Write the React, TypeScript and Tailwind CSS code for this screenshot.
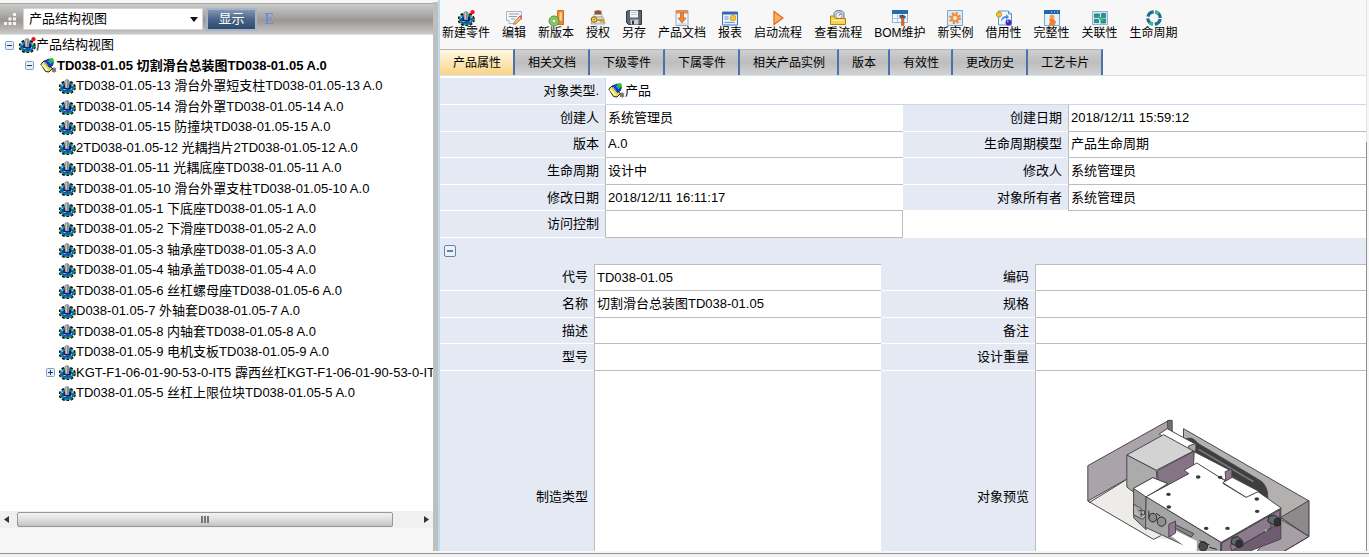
import React from 'react';
import { clsx } from 'clsx';

type IconProps = { className?: string };

function GearIcon({ dot = false, className }: IconProps & { dot?: boolean }) {
  return (
    <svg viewBox="0 0 17 16" className={clsx('shrink-0', className)} aria-hidden="true">
      <ellipse cx="8.200" cy="9.500" rx="7.800" ry="6" fill="none" stroke="#0a1a10" strokeWidth="1.800" strokeDasharray="2.800 1.600" />
      <ellipse cx="8.200" cy="9.500" rx="7" ry="5.200" fill="#1450c8" />
      <ellipse cx="8.200" cy="9.800" rx="6.400" ry="4.600" fill="none" stroke="#12a038" strokeWidth="2" strokeDasharray="2 2.400" />
      <path d="M2.500 6.500h2v1.500h-2zM11 10h2v1.500h-2zM4.500 11h2v1h-2zM12.500 6.500h1.500v1.500h-1.500z" fill="#6fd6ff" />
      <path d="M4.500 7h7.500v4H4.500z" fill="#0a1850" />
      <path d="M6 2.500q2-2 4 0V10H6z" fill="#c9c9cd" stroke="#55555c" strokeWidth=".6" />
      <path d="M8.800 2.200v7.600" stroke="#77777e" strokeWidth="1.200" />
      {dot && <circle cx="14.500" cy="2.200" r="2.100" fill="#fb0d1b" />}
    </svg>
  );
}

function AssemblyIcon({ className }: IconProps) {
  return (
    <svg viewBox="0 0 17 16" className={clsx('shrink-0', className)} aria-hidden="true">
      <path d="M.800 6L4 3l8.500 7.500L9 14 5.500 13.500z" fill="#e8dc4c" stroke="#2b2a08" strokeWidth="1" />
      <path d="M2 6.500l5.500 6" stroke="#fffbd0" strokeWidth="1.800" />
      <path d="M4 3l5-2 4.500 3-1 3.500-3 2z" fill="#1538d8" stroke="#0a1560" strokeWidth=".7" />
      <path d="M5 4l3 3.500M8 2.500l3 3.500" stroke="#52a8ff" strokeWidth="1" />
      <circle cx="11.500" cy="2.500" r="2.400" fill="#17d129" />
      <path d="M14 9.500v5M11.800 10.500l4.400 3M16.200 10.500l-4.400 3" stroke="#222" strokeWidth="1" />
      <circle cx="14" cy="12" r="1" fill="#fff" stroke="#222" strokeWidth=".6" />
    </svg>
  );
}

const toolIcons: Record<string, React.ReactNode> = {
  edit: (
    <>
      <path d="M.5 1.500h15v8H12l-2 4H3v-3H.500z" fill="#f5f8fb" stroke="#a9b6c4" />
      <path d="M3 4h10M3 6.500h8M5 9h4" stroke="#8fa0b3" />
      <path d="M7.500 14.500l1-3 6-6 2 2-6 6z" fill="#f0b672" stroke="#a8662a" strokeWidth=".7" />
      <path d="M13.500 6l2 2" stroke="#d4576a" strokeWidth="1.300" />
    </>
  ),
  version: (
    <>
      <path d="M9.500.500h6v14h-6z" fill="#f28a2c" stroke="#d46f15" />
      <path d="M11.500 2.500h2.500v8h-2.500z" fill="#fbd8a8" />
      <circle cx="6" cy="11" r="5" fill="#8cc765" stroke="#4c9a39" />
      <circle cx="6" cy="11" r="2" fill="#f4fbef" stroke="#4c9a39" strokeWidth=".7" />
    </>
  ),
  auth: (
    <>
      <path d="M4.500 1q3.500-1.500 7 0v4h-7z" fill="#90512c" />
      <path d="M4 4.500h8v2.500H4z" fill="#f8f8fa" stroke="#959aa5" strokeWidth=".7" />
      <path d="M3 7h10l2 7H1z" fill="#d9dde4" stroke="#8e94a0" strokeWidth=".7" />
      <circle cx="4" cy="9.500" r="2.700" fill="#ffe36b" stroke="#98760c" strokeWidth="1.200" />
      <path d="M6.500 10h7v3M11 10v2.500" stroke="#c9a01e" strokeWidth="1.800" fill="none" />
      <circle cx="4" cy="9.500" r=".8" fill="#715508" />
    </>
  ),
  save: (
    <>
      <path d="M.500 1.500l2-1h13v14h-13l-2-2z" fill="#5c6770" stroke="#313940" />
      <path d="M4 .500h8v7H4z" fill="#f2f4f5" />
      <path d="M5 2.500h6M5 4.500h6" stroke="#c2c8cc" />
      <path d="M4.500 9.500h8v5h-8z" fill="#c7cdd1" />
      <path d="M6 10.500h2v4H6z" fill="#2f373d" />
    </>
  ),
  document: (
    <>
      <path d="M2 .500h12v15H2z" fill="#f3f6fb" stroke="#98a9c4" />
      <path d="M2 .500h12v3H2z" fill="#e98a43" />
      <path d="M6.500 3h3v5H12l-4 5-4-5h2.500z" fill="#f08534" stroke="#cf5f12" strokeWidth=".7" />
      <path d="M4 14h8" stroke="#b5c4de" />
    </>
  ),
  report: (
    <>
      <path d="M.500 2h15v13H.500z" fill="#e5f0fd" stroke="#4776b8" />
      <path d="M.500 2h15v2.500H.500z" fill="#2f67b5" />
      <path d="M2.500 7h4M2.500 9h4M2.500 12.500h10" stroke="#6d9ad4" />
      <circle cx="11" cy="8" r="2.900" fill="#f3c433" stroke="#c98c14" strokeWidth=".6" />
    </>
  ),
  start: <path d="M4 1.500v13l9-6.500z" fill="#fbae5c" stroke="#e06a16" strokeWidth="1.200" />,
  viewflow: (
    <>
      <path d="M4 4q0-3.500 5-3.500t5 3.500v6H4z" fill="#c7d3dd" stroke="#6d7a86" />
      <circle cx="9" cy="5.500" r="3" fill="#edf5fa" stroke="#7e8c99" strokeWidth=".7" />
      <path d="M9 5.500l1.800-1.800" stroke="#34404b" />
      <path d="M.500 6H4l1.500 2.500H15.500v6H.500z" fill="#f6d154" stroke="#af8413" />
      <path d="M2 10.500h12" stroke="#fff0ab" />
    </>
  ),
  bom: (
    <>
      <path d="M.500.500h15v12H.500z" fill="#f7fbff" stroke="#8cb2d6" />
      <path d="M0 0h16v4H0z" fill="#246baf" />
      <path d="M.500 8.500h15M5.500 4v8.500M10.500 4v8.500" stroke="#a9c9e6" />
      <path d="M7 5.500q4-2 7 1l-1 1.500H8z" fill="#525b64" />
      <path d="M9.500 8h2.500v7.500H9.500z" fill="#ea6638" stroke="#b53d15" strokeWidth=".5" />
    </>
  ),
  instance: (
    <>
      <path d="M.500.500h15v15H.500z" fill="#dcebf8" stroke="#7ba9d2" />
      <circle cx="8" cy="8" r="4.300" fill="#f29143" />
      <circle cx="8" cy="8" r="5" fill="none" stroke="#ee8231" strokeWidth="2" strokeDasharray="2 1.927" />
      <circle cx="8" cy="8" r="1.900" fill="#fdf3e7" />
    </>
  ),
  borrow: (
    <>
      <path d="M2.500 1h10l3 3v11h-13z" fill="#f1f7ff" stroke="#5b91d3" />
      <path d="M12.500 1v3h3" fill="none" stroke="#5b91d3" />
      <path d="M5 12q0-6 5-6V4l3 3-3 3V8q-3 0-5 4z" fill="#4c8de4" />
      <circle cx="3" cy="4.500" r="2.700" fill="#f2c222" stroke="#ae820d" strokeWidth=".6" />
      <circle cx="12.500" cy="12.500" r="3" fill="#4226b6" />
      <circle cx="11.700" cy="11.500" r="1" fill="#a392ec" />
    </>
  ),
  integrity: (
    <>
      <path d="M.500.500h15v15H.500z" fill="#e9f3fc" stroke="#78a7d4" />
      <path d="M0 0h16v4H0z" fill="#1c67ae" />
      <path d="M7 2h1M10 2h1M13 2h1" stroke="#d7eaff" />
      <circle cx="8" cy="7" r="2.500" fill="#f5a35c" />
      <path d="M5 9h5l2 3-1.500 3.500h-6L6 12z" fill="#ef8332" />
    </>
  ),
  relation: (
    <>
      <path d="M.500 1.500h15v13H.500z" fill="#cfe3f1" stroke="#8eb5cd" />
      <path d="M2.500 4h5v3.500h-5zM9.500 3.500h4v4h-4zM2.500 9.500h4v3h-4zM9 9h4.500v4H9z" fill="#28958d" stroke="#126a70" strokeWidth=".6" />
      <path d="M6 6l5 5" stroke="#33b481" strokeWidth="1.800" />
    </>
  ),
  lifecycle: (
    <>
      <circle cx="8" cy="8" r="6.200" fill="none" stroke="#1d6f8e" strokeWidth="3.200" strokeDasharray="7.739 2" strokeDashoffset="-1" />
      <path d="M12.400 3.600A6.200 6.200 0 0 0 9 1.900M3.600 12.400A6.200 6.200 0 0 0 7 14.100" fill="none" stroke="#3bb594" strokeWidth="3.200" />
    </>
  ),
};

const tools = [
  { label: '新建零件', icon: 'gear' },
  { label: '编辑', icon: 'edit' },
  { label: '新版本', icon: 'version' },
  { label: '授权', icon: 'auth' },
  { label: '另存', icon: 'save' },
  { label: '产品文档', icon: 'document' },
  { label: '报表', icon: 'report' },
  { label: '启动流程', icon: 'start' },
  { label: '查看流程', icon: 'viewflow' },
  { label: 'BOM维护', icon: 'bom' },
  { label: '新实例', icon: 'instance' },
  { label: '借用性', icon: 'borrow' },
  { label: '完整性', icon: 'integrity' },
  { label: '关联性', icon: 'relation' },
  { label: '生命周期', icon: 'lifecycle' },
];

const tabs = ['产品属性', '相关文档', '下级零件', '下属零件', '相关产品实例', '版本', '有效性', '更改历史', '工艺卡片'];

const parts = [
  'TD038-01.05-13 滑台外罩短支柱TD038-01.05-13 A.0',
  'TD038-01.05-14 滑台外罩TD038-01.05-14 A.0',
  'TD038-01.05-15 防撞块TD038-01.05-15 A.0',
  '2TD038-01.05-12 光耦挡片2TD038-01.05-12 A.0',
  'TD038-01.05-11 光耦底座TD038-01.05-11 A.0',
  'TD038-01.05-10 滑台外罩支柱TD038-01.05-10 A.0',
  'TD038-01.05-1 下底座TD038-01.05-1 A.0',
  'TD038-01.05-2 下滑座TD038-01.05-2 A.0',
  'TD038-01.05-3 轴承座TD038-01.05-3 A.0',
  'TD038-01.05-4 轴承盖TD038-01.05-4 A.0',
  'TD038-01.05-6 丝杠螺母座TD038-01.05-6 A.0',
  'D038-01.05-7 外轴套D038-01.05-7 A.0',
  'TD038-01.05-8 内轴套TD038-01.05-8 A.0',
  'TD038-01.05-9 电机支板TD038-01.05-9 A.0',
  'KGT-F1-06-01-90-53-0-IT5 霹西丝杠KGT-F1-06-01-90-53-0-IT5',
  'TD038-01.05-5 丝杠上限位块TD038-01.05-5 A.0',
];

function Toggle({ open, label }: { open: boolean; label: string }) {
  return (
    <button type="button" aria-label={label} aria-expanded={open} className="size-[9px] shrink-0">
      <svg viewBox="0 0 9 9" className="size-[9px]">
        <rect x=".5" y=".5" width="8" height="8" rx="1" fill="#e6f0fa" stroke="#7f9fc4" />
        <path d={open ? 'M2 4.500h5' : 'M2 4.500h5M4.500 2v5'} stroke="#1f3556" />
      </svg>
    </button>
  );
}

function TreePanel() {
  return (
    <aside className="flex w-[433px] shrink-0 flex-col overflow-hidden bg-white">
      <div className="h-[3px] shrink-0 bg-[#f7f7f7]" />
      <div className="flex h-8 shrink-0 items-center border-y border-t-[#a8a8a8] border-b-[#e2e2e2] bg-linear-to-b from-[#cdcdcd] via-[#9b9793] via-55% to-[#c9c9c9] pl-1">
        <svg viewBox="0 0 12 12" className="mr-[7px] size-3" fill="#f4f4f4" aria-hidden="true">
          <path d="M0 9h3v3H0zM4.500 9h3v3h-3zM9 9h3v3H9zM4.500 4.500h3v3h-3zM9 4.500h3v3H9zM9 0h3v3H9z" />
        </svg>
        <div className="relative">
          <select aria-label="视图" className="block h-[22px] w-[180px] appearance-none border border-[#d4d4d4] bg-white pl-[5px] text-[13px] leading-5">
            <option>产品结构视图</option>
          </select>
          <svg viewBox="0 0 8 5" className="pointer-events-none absolute top-[9px] right-[5px] h-[5px] w-2" aria-hidden="true">
            <path d="M0 0h8L4 5z" fill="#111" />
          </svg>
        </div>
        <button type="button" className="ml-[3px] h-[23px] w-[51px] border-2 border-[#a5b4c9] bg-linear-to-b from-[#8296b0] via-[#476488] via-50% to-[#2f4a6d] text-[13px] leading-[18px] text-white">
          显示
        </button>
        <span className="ml-[7px] font-['Liberation_Serif',serif] text-base text-[#5b8bea]">E</span>
      </div>

      <ul className="grid h-[368px] shrink-0 auto-rows-fr overflow-hidden text-[13px] whitespace-nowrap">
        <li className="flex items-center pl-[5px]">
          <Toggle open label="产品结构视图" />
          <GearIcon dot className="ml-[5px] h-4 w-[17px]" />
          产品结构视图
        </li>
        <li className="flex items-center pl-[25px] font-bold">
          <Toggle open label="TD038-01.05" />
          <AssemblyIcon className="ml-[6px] h-4 w-[17px]" />
          TD038-01.05 切割滑台总装图TD038-01.05 A.0
        </li>
        {parts.map((part) => (
          <li key={part} className="flex items-center pl-[46px]">
            {part.startsWith('KGT') ? <Toggle open={false} label={part} /> : <span className="w-[9px]" />}
            <GearIcon className="ml-1 h-4 w-[17px]" />
            {part}
          </li>
        ))}
      </ul>

      <div className="mt-auto flex h-[17px] shrink-0 items-center gap-2 bg-[#f0f0f0] px-1">
        <svg viewBox="0 0 5 7" className="h-[7px] w-[5px]" aria-hidden="true">
          <path d="M5 0v7L0 3.500z" fill="#333" />
        </svg>
        <div className="flex h-[15px] w-[376px] items-center justify-center gap-px rounded-[2px] border border-[#979797] bg-linear-to-b from-[#f3f3f3] via-[#dedfe0] to-[#c0c2c5]">
          <span className="h-[7px] w-[2px] bg-[#777]" />
          <span className="h-[7px] w-[2px] bg-[#777]" />
          <span className="h-[7px] w-[2px] bg-[#777]" />
        </div>
        <svg viewBox="0 0 5 7" className="ml-auto h-[7px] w-[5px]" aria-hidden="true">
          <path d="M0 0v7l5-3.500z" fill="#333" />
        </svg>
      </div>
      <div className="h-[23px] shrink-0 bg-[#f6f6f6]" />
    </aside>
  );
}

function Toolbar() {
  return (
    <div className="flex h-[49px] shrink-0 gap-3 overflow-hidden pt-[10px] pl-[2px]">
      {tools.map(({ label, icon }) => (
        <button key={label} type="button" className="flex shrink-0 flex-col items-center text-xs leading-[14px] whitespace-nowrap">
          {icon === 'gear' ? (
            <GearIcon dot className="h-4 w-[17px]" />
          ) : (
            <svg viewBox="0 0 16 16" className="size-4" fill="none" aria-hidden="true">
              {toolIcons[icon]}
            </svg>
          )}
          {label}
        </button>
      ))}
    </div>
  );
}

function Tabs() {
  return (
    <div role="tablist" className="flex h-[26px] shrink-0 overflow-hidden">
      {tabs.map((tab, i) => (
        <button
          key={tab}
          type="button"
          role="tab"
          aria-selected={i === 0}
          className={clsx(
            'shrink-0 border-t border-r-2 border-t-[#b5b5b5] border-r-[#4a72ae] pr-3 pl-[13px] text-xs whitespace-nowrap',
            i === 0
              ? 'bg-linear-to-b from-[#fff8e2] to-[#fad384]'
              : 'bg-linear-to-b from-[#cfcfcf] via-[#bdbdbd] to-[#d2d2d2]',
          )}
        >
          {tab}
        </button>
      ))}
    </div>
  );
}

function Label({ children }: { children: React.ReactNode }) {
  return (
    <th scope="row" className="border-b border-white bg-[#e4e9f4] p-0 pr-[6px] text-right font-normal">
      {children}
    </th>
  );
}

function Value({ children, className }: { children?: React.ReactNode; className?: string }) {
  return <td className={clsx('border-b border-l border-[#bdbdbd] bg-white p-0 pl-[2px]', className)}>{children}</td>;
}

function SlidePreview() {
  return (
    <svg viewBox="51 57 668 396" className="mx-auto h-[132px] w-[223px]" role="img" aria-label="切割滑台总装图" strokeLinejoin="round">
      <g stroke="#4b474b" strokeWidth="3">
        <path d="M53 302L165 236l120 10 120 180-145-10-12 2z" fill="#edece8" stroke="none" />
        <path d="M53 197L298 60V165L53 303z" fill="#aaa3aa" />
        <path d="M292 62l14-1v85l-10 8z" fill="#777177" />
        <path d="M53 303L250 418l22-11M57 308l110-68" fill="none" />
        <path d="M340 86L715 302v10l-80 45-295-180z" fill="#b3b1af" />
        <path d="M632 357l84-55v108l-85 50-70-6z" fill="#a79fa6" />
        <path d="M632 352l84-50v108z" fill="#8e8a8c" />
        <path d="M715 410l-75 45M635 360l80 48" fill="none" />
        <path d="M345 118q20-12 38 12l178 106q34 16 32 60l-34-22-195-120z" fill="#3e3d3f" />
        <path d="M385 148l165 97" fill="none" stroke="#77767a" strokeWidth="5" />
        <path d="M267 102l24-16 86 47v18l-22 9z" fill="#fff" />
        <path d="M355 138l22-8v22l-18 8z" fill="#aaa" />
        <path d="M170 165l110-61 90 49-112 58z" fill="#d3d3d3" />
        <path d="M170 165l88 46 6 64-70 4-24-18z" fill="#ababab" />
        <path d="M262 212l110-59v80l-108 48z" fill="#857486" />
        <path d="M372 155l112 58-2 35-112-52z" fill="#fff" />
        <path d="M465 215l20-8v30l-18 7z" fill="#8f7a92" />
        <path d="M190 265l58-32 45 18-65 40v98l-37-35z" fill="#9b9b9b" />
        <path d="M190 265l58-32 45 18-65 40z" fill="#fff" />
        <path d="M190 312v32l26 14 10-8M190 312l23 14v25M205 332h18v12h-12" fill="#b5b5b5" />
        <path d="M228 290l224 137v60L226 382z" fill="#a5a5a5" />
        <path d="M452 427l180-103v93l-180 70z" fill="#6f5c70" />
        <path d="M455 429l174-100v40L480 455l-26 4z" fill="#8b798c" />
        <path d="M228 290l128-69-14-10 38-22 86 54-8 7 68 41 36-17 71 50-180 103z" fill="#fff" />
        <path d="M458 248l28-16 80 42-38 18z" fill="#fff" />
        <path d="M300 405l18-12 62 30v30h-20z" fill="#fff" stroke="none" />
        <path d="M296 373l20-10v36l-20 12z" fill="#8f7a92" />
        <path d="M316 374l55 27-8 10-48-27z" fill="#858585" />
        <path d="M480 436l32-20M480 436l6 20M512 437l90-52v-18" fill="none" />
      </g>
      <g fill="#3b383b">
        {[[384, 231], [450, 232], [295, 283], [296, 321], [408, 385], [472, 385], [560, 297], [561, 334]].map(([x, y]) => (
          <ellipse key={`${x}-${y}`} cx={x} cy={y} rx="7" ry="5" />
        ))}
      </g>
      <g stroke="#29272a" strokeWidth="3">
        <path d="M595 350l18-5 18 12v18l-12 4-26-14z" fill="#5e6670" />
        <ellipse cx="621" cy="366" rx="9" ry="11" fill="#30343a" />
        <path d="M486 414l16-5 16 14v15l-12 5-24-14z" fill="#5e6670" />
        <ellipse cx="506" cy="431" rx="9" ry="11" fill="#30343a" />
        <ellipse cx="248" cy="353" rx="12" ry="13" fill="#8a8a8a" />
        <ellipse cx="274" cy="365" rx="13" ry="14" fill="#909090" />
        <path d="M236 332v20M258 340l12 8" fill="none" />
        <ellipse cx="399" cy="439" rx="13" ry="14" fill="#4b4b4b" />
        <path d="M388 422l30 13M418 442l22 6" fill="none" />
      </g>
      <circle cx="587" cy="391" r="4" fill="#aaa2ab" />
    </svg>
  );
}

function Properties() {
  return (
    <div className="min-h-0 flex-1 overflow-hidden border-t border-[#d3e4f5] bg-white pt-[2px] text-[13px] leading-5">
      <table className="h-[160px] w-full table-fixed border-separate border-spacing-0">
        <colgroup>
          <col className="w-[165px]" />
          <col />
          <col className="w-[165px]" />
          <col />
        </colgroup>
        <tbody>
          <tr className="h-[27px]">
            <Label>对象类型.</Label>
            <td colSpan={3} className="border-b border-l border-[#c4d9ef] p-0 pl-[2px]">
              <span className="flex items-center">
                <AssemblyIcon className="h-4 w-[17px]" />
                产品
              </span>
            </td>
          </tr>
          <tr>
            <Label>创建人</Label>
            <Value>系统管理员</Value>
            <Label>创建日期</Label>
            <Value>2018/12/11 15:59:12</Value>
          </tr>
          <tr>
            <Label>版本</Label>
            <Value>A.0</Value>
            <Label>生命周期模型</Label>
            <Value>产品生命周期</Value>
          </tr>
          <tr>
            <Label>生命周期</Label>
            <Value>设计中</Value>
            <Label>修改人</Label>
            <Value>系统管理员</Value>
          </tr>
          <tr>
            <Label>修改日期</Label>
            <Value>2018/12/11 16:11:17</Value>
            <Label>对象所有者</Label>
            <Value>系统管理员</Value>
          </tr>
          <tr>
            <Label>访问控制</Label>
            <Value className="border-r" />
            <td colSpan={2} />
          </tr>
        </tbody>
      </table>

      <div className="flex h-[26px] items-center bg-[#e4e9f4] pl-1">
        <button type="button" aria-label="折叠" className="size-3">
          <svg viewBox="0 0 12 12" className="size-3">
            <rect x=".5" y=".5" width="11" height="11" rx="1.500" fill="#e9f1fa" stroke="#6883a8" />
            <path d="M3 6h6" stroke="#335b90" strokeWidth="1.500" />
          </svg>
        </button>
      </div>

      <table className="w-full table-fixed border-separate border-spacing-0">
        <colgroup>
          <col className="w-[154px]" />
          <col className="w-[31%]" />
          <col className="w-[154px]" />
          <col />
        </colgroup>
        <tbody>
          <tr className="h-[27px]">
            <Label>代号</Label>
            <Value className="border-t">TD038-01.05</Value>
            <Label>编码</Label>
            <Value className="border-t" />
          </tr>
          <tr className="h-[27px]">
            <Label>名称</Label>
            <Value>切割滑台总装图TD038-01.05</Value>
            <Label>规格</Label>
            <Value />
          </tr>
          <tr className="h-[26px]">
            <Label>描述</Label>
            <Value />
            <Label>备注</Label>
            <Value />
          </tr>
          <tr className="h-[27px]">
            <Label>型号</Label>
            <Value />
            <Label>设计重量</Label>
            <Value />
          </tr>
          <tr className="h-[252px]">
            <Label>制造类型</Label>
            <Value />
            <Label>对象预览</Label>
            <Value className="pt-12 pr-2 align-top">
              <SlidePreview />
            </Value>
          </tr>
        </tbody>
      </table>
    </div>
  );
}

export default function App() {
  return (
    <div className="flex h-screen flex-col overflow-hidden bg-[#f7f7f7] font-['Liberation_Sans','Noto_Sans_CJK_SC',sans-serif] text-black">
      <div className="flex min-h-0 flex-1">
        <TreePanel />
        <div className="mt-[2px] w-[5px] shrink-0 bg-[#bfbfbf]" />
        <main className="flex min-w-0 flex-1 flex-col border-l-2 border-[#b5dcf2]">
          <Toolbar />
          <Tabs />
          <Properties />
        </main>
        <div className="flex w-[3px] shrink-0 flex-col">
          <div className="h-[142px] w-px bg-[#e3e3e3]" />
          <div className="w-px flex-1 bg-[#8f8f8f]" />
        </div>
      </div>
      <footer className="mt-[2px] h-1 shrink-0 border-t border-[#8f8f8f] bg-[#f2f2f2]" />
    </div>
  );
}
